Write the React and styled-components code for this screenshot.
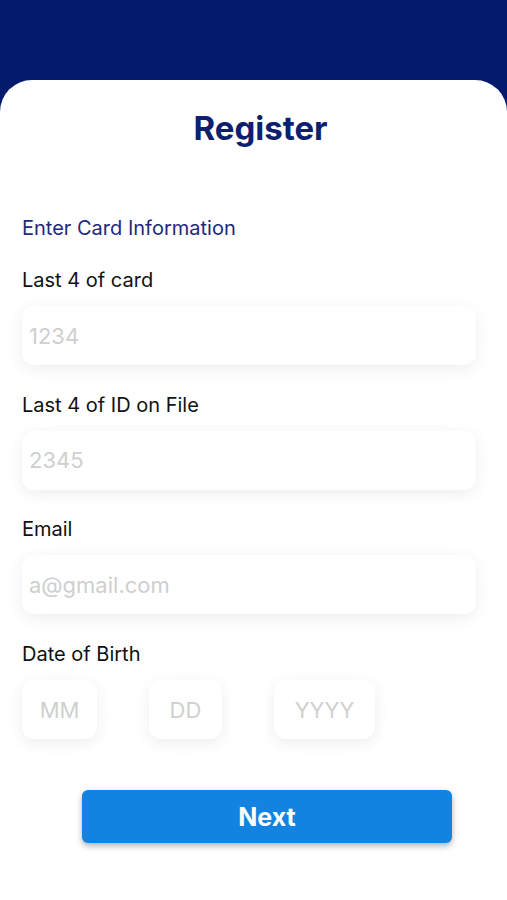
import React from 'react';
import styled, { createGlobalStyle } from 'styled-components';

const GlobalStyle = createGlobalStyle`
  * { box-sizing: border-box; }
  html, body { margin: 0; padding: 0; }
  body {
    background: #041a6c;
    font-family: Inter, "Noto Sans", "Liberation Sans", sans-serif;
  }
`;

const Screen = styled.div`
  width: 507px;
  height: 900px;
  background: #041a6c;
  padding-top: 80px;
  overflow: hidden;
`;

const Card = styled.div`
  background: #fff;
  height: 100%;
  border-radius: 32px 32px 0 0;
  padding: 30px 31px 0 22px;
  display: flex;
  flex-direction: column;
`;

const Title = styled.h1`
  margin: 0;
  text-align: center;
  font-size: 33px;
  line-height: 37px;
  font-weight: 700;
  color: #0d1f6e;
  padding-left: 23px;
`;

const SectionTitle = styled.div`
  margin-top: 69px;
  font-size: 20px;
  line-height: 24px;
  color: #1d2a7c;
`;

const Fields = styled.div`
  margin-top: 28px;
  display: flex;
  flex-direction: column;
  gap: 27.7px;
`;

const Field = styled.div`
  display: flex;
  flex-direction: column;
  gap: 14px;
`;

const Label = styled.label`
  font-size: 20px;
  line-height: 24px;
  color: #111;
`;

const Input = styled.input`
  width: ${p => p.$width || '100%'};
  height: 59px;
  border: none;
  outline: none;
  border-radius: 12px;
  background: #fff;
  box-shadow: 0 4px 16px rgba(0, 0, 0, 0.07);
  padding: 0 ${p => (p.$center ? '0' : '7px')};
  text-align: ${p => (p.$center ? 'center' : 'left')};
  font-family: Inter, "Noto Sans", "Liberation Sans", sans-serif;
  font-size: 22px;
  color: #333;
  &::placeholder { color: #cfcfcf; }
`;

const DateRow = styled.div`
  display: flex;
  gap: 52px;
`;

const Button = styled.button`
  margin: 51px 0 0 60px;
  width: 370px;
  height: 53px;
  border: none;
  border-radius: 6px;
  background: #1383e2;
  color: #fff;
  font-family: Inter, "Noto Sans", "Liberation Sans", sans-serif;
  font-size: 25px;
  font-weight: 700;
  box-shadow: 0 3px 6px rgba(0, 0, 0, 0.3);
  cursor: pointer;
`;

export default function App() {
  return (
    <Screen>
      <GlobalStyle />
      <Card>
        <Title>Register</Title>
        <SectionTitle>Enter Card Information</SectionTitle>
        <Fields>
          <Field>
            <Label>Last 4 of card</Label>
            <Input placeholder="1234" />
          </Field>
          <Field>
            <Label>Last 4 of ID on File</Label>
            <Input placeholder="2345" />
          </Field>
          <Field>
            <Label>Email</Label>
            <Input placeholder="a@gmail.com" />
          </Field>
          <Field>
            <Label>Date of Birth</Label>
            <DateRow>
              <Input $center $width="75px" placeholder="MM" />
              <Input $center $width="73px" placeholder="DD" />
              <Input $center $width="101px" placeholder="YYYY" />
            </DateRow>
          </Field>
        </Fields>
        <Button>Next</Button>
      </Card>
    </Screen>
  );
}
